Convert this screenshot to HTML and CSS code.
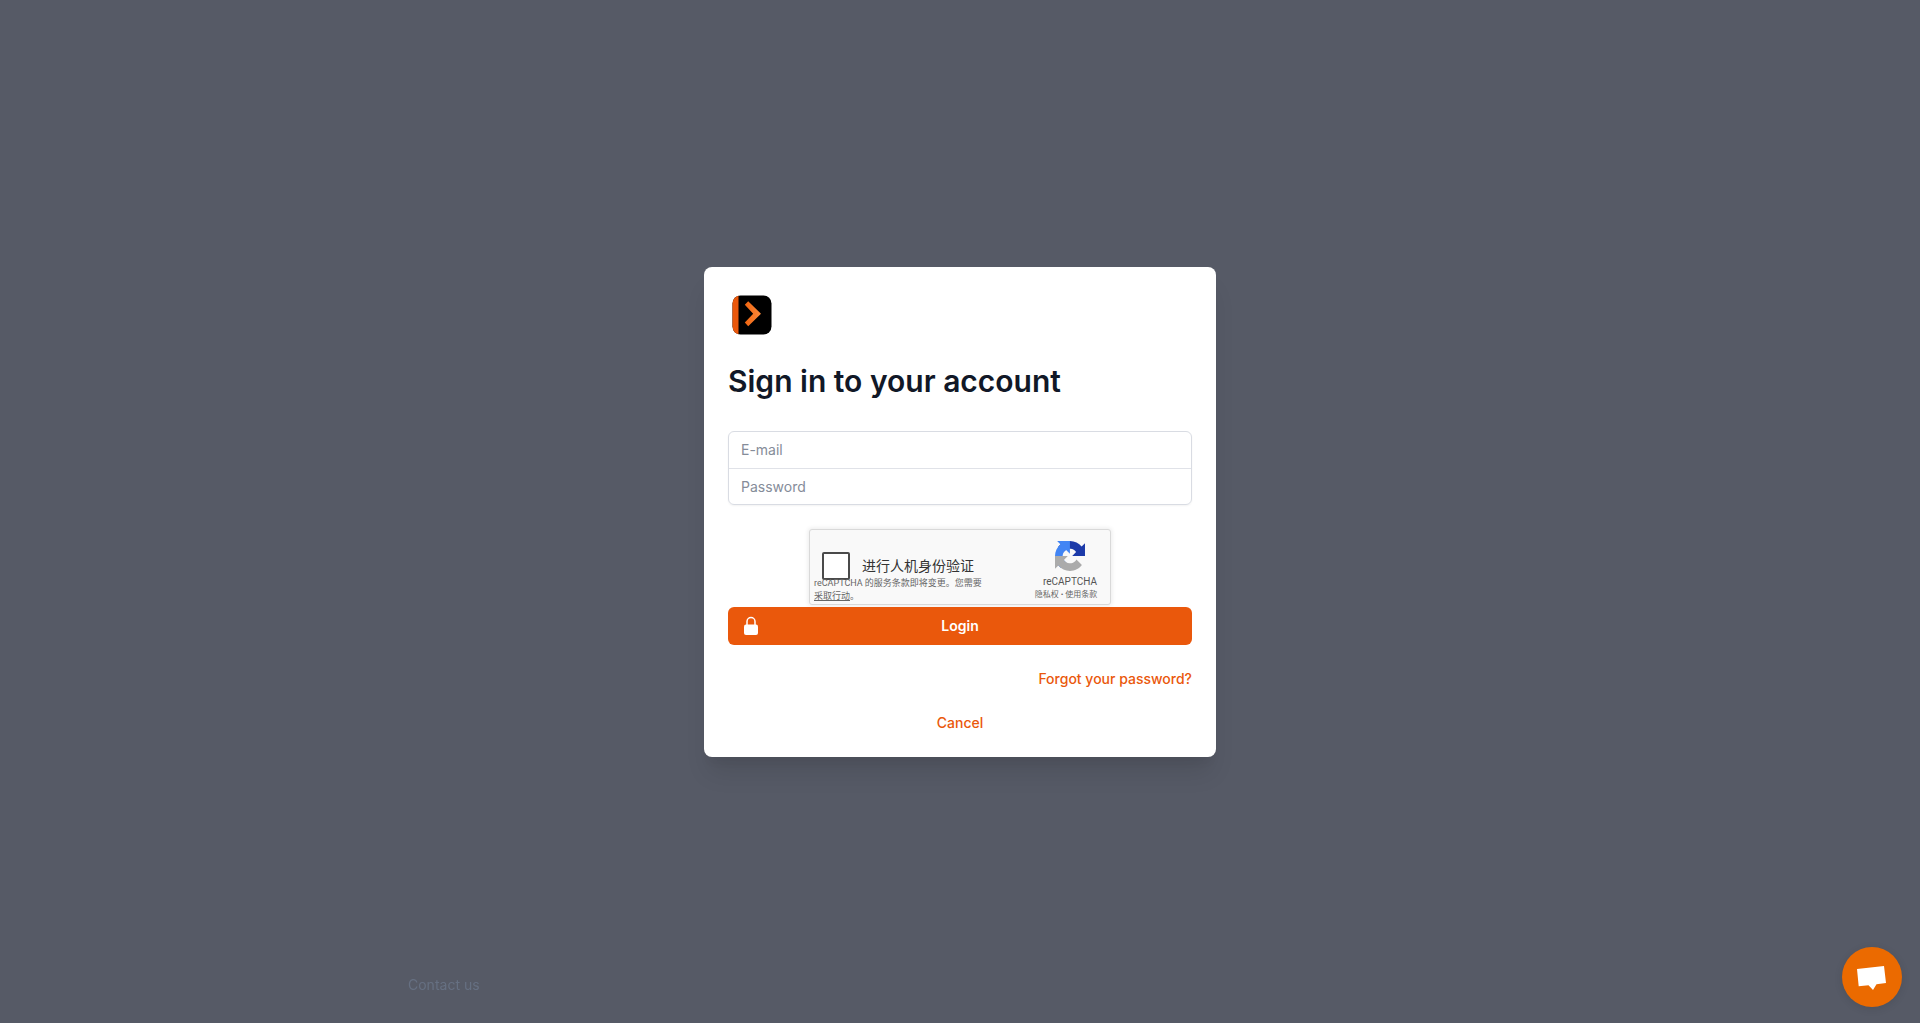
FILE: index.html
```
<!DOCTYPE html>
<html lang="en">
<head>
    <meta charset="UTF-8">
    <meta name="viewport" content="width=device-width, initial-scale=1.0">
    <title>Sign in to your account</title>
    <link rel="stylesheet" href="styles.css">
</head>
<body>
    <main class="page">
        <div class="card">
            <svg class="logo" viewBox="0 0 48 48" aria-hidden="true">
                <defs>
                    <linearGradient id="arrow" x1="0" y1="0" x2="1" y2="0">
                        <stop offset="0" stop-color="#f0640f"/>
                        <stop offset="1" stop-color="#fb8a3c"/>
                    </linearGradient>
                    <clipPath id="tile"><rect x="4.5" y="4.5" width="39" height="39" rx="8"/></clipPath>
                </defs>
                <g clip-path="url(#tile)">
                    <rect width="48" height="48" fill="#000"/>
                    <rect width="10.5" height="48" fill="#ea580c"/>
                </g>
                <path d="M20.2 10.2L33 22.7L20.2 35.2L16.8 31.6L25.2 22.7L16.8 13.8Z" fill="url(#arrow)"/>
            </svg>
            <h1>Sign in to your account</h1>
            <form>
                <div class="fields">
                    <input type="email" name="email" placeholder="E-mail" aria-label="E-mail">
                    <input type="password" name="password" placeholder="Password" aria-label="Password">
                </div>
                <div class="captcha" lang="zh-CN">
                    <div class="captcha-main">
                        <div class="captcha-check">
                            <input type="checkbox" id="robot">
                            <label for="robot">进行人机身份验证</label>
                        </div>
                        <p class="captcha-notice">reCAPTCHA 的服务条款即将变更。您需要<a href="#">采取行动</a>。</p>
                    </div>
                    <div class="captcha-brand">
                        <svg class="captcha-logo" viewBox="0 0 64 64" aria-hidden="true">
                            <path fill="#1c3aa9" d="M64 31.955l-.033-1.37V4.687l-7.16 7.16C50.948 4.674 42.033.093 32.05.093c-10.4 0-19.622 4.96-25.458 12.64l11.736 11.86a15.55 15.55 0 0 1 4.754-5.334c2.05-1.6 4.952-2.906 8.968-2.906.485 0 .86.057 1.135.163 4.976.393 9.288 3.14 11.828 7.124l-8.307 8.307L64 31.953"/>
                            <path fill="#4285f4" d="M31.862.094l-1.37.033H4.594l7.16 7.16C4.58 13.147 0 22.06 0 32.046c0 10.4 4.96 19.622 12.64 25.458L24.5 45.768a15.55 15.55 0 0 1-5.334-4.754c-1.6-2.05-2.906-4.952-2.906-8.968 0-.485.057-.86.163-1.135.393-4.976 3.14-9.288 7.124-11.828l8.307 8.307L31.86.095"/>
                            <path fill="#ababab" d="M.001 32.045l.033 1.37v25.898l7.16-7.16c5.86 7.173 14.774 11.754 24.76 11.754 10.4 0 19.622-4.96 25.458-12.64l-11.736-11.86a15.55 15.55 0 0 1-4.754 5.334c-2.05 1.6-4.952 2.906-8.968 2.906-.485 0-.86-.057-1.135-.163-4.976-.393-9.288-3.14-11.828-7.124l8.307-8.307c-10.522.04-22.4.066-27.295-.005"/>
                        </svg>
                        <span class="captcha-name">reCAPTCHA</span>
                        <span class="captcha-links"><a href="#">隐私权</a> • <a href="#">使用条款</a></span>
                    </div>
                </div>
                <button type="submit" class="login">
                    <svg class="lock" viewBox="0 0 20 20" aria-hidden="true">
                        <path d="M6 9V5.5a4 4 0 0 1 8 0V9" fill="none" stroke="#fff" stroke-width="1.5"/>
                        <rect x="3" y="8.5" width="14" height="10.5" rx="2" fill="#fff"/>
                    </svg>
                    <span>Login</span>
                </button>
            </form>
            <a href="#" class="link forgot">Forgot your password?</a>
            <a href="#" class="link cancel">Cancel</a>
        </div>
    </main>
    <footer class="footer">
        <a href="#">Contact us</a>
    </footer>
    <button type="button" class="chat" aria-label="Open chat">
        <svg viewBox="0 0 60 60" aria-hidden="true">
            <path d="M15 22L42 19L44 36L34.5 37.2L31 43L26.5 38.2L16.7 39.2Z" fill="#fff"/>
        </svg>
    </button>
</body>
</html>
```
FILE: styles.css
```
* {
    box-sizing: border-box;
}
body {
    font-family: Inter, "Noto Sans CJK SC", sans-serif;
    font-size: 14px;
    line-height: 20px;
    background-color: #565a66;
    color: #111827;
    margin: 0;
    min-height: 100vh;
}
a {
    color: inherit;
    text-decoration: none;
}
.page {
    display: flex;
    align-items: center;
    justify-content: center;
    min-height: 100vh;
}
.card {
    display: flex;
    flex-direction: column;
    width: 100%;
    max-width: 512px;
    padding: 24px;
    background-color: #fff;
    border-radius: 8px;
    box-shadow: 0 20px 25px -5px rgba(0, 0, 0, 0.1), 0 10px 10px -5px rgba(0, 0, 0, 0.04);
}
.logo {
    width: 48px;
    height: 48px;
}
h1 {
    margin: 24px 0 32px;
    font-size: 30px;
    line-height: 36px;
    font-weight: 600;
}
.fields {
    display: flex;
    flex-direction: column;
    border: 1px solid #d9dce3;
    border-radius: 6px;
    box-shadow: 0 1px 2px rgba(0, 0, 0, 0.05);
}
.fields input {
    height: 36px;
    padding: 0 12px;
    border: 0;
    border-radius: 6px;
    background: none;
    font: inherit;
}
.fields input + input {
    border-top: 1px solid #e0e2e8;
    border-radius: 0 0 6px 6px;
}
.fields input::placeholder {
    color: #858c99;
}

/* captcha box */
.captcha {
    display: flex;
    justify-content: space-between;
    width: 302px;
    height: 76px;
    margin: 24px auto 2px;
    background-color: #f9f9f9;
    border: 1px solid #d9d9d9;
    border-radius: 3px;
    box-shadow: 0 0 4px 1px rgba(0, 0, 0, 0.08);
    font-family: Roboto, "Noto Sans CJK SC", sans-serif;
    color: #666;
}
.captcha-main {
    width: 176px;
    padding: 22px 0 0 4px;
}
.captcha-check {
    display: flex;
    align-items: center;
    gap: 12px;
    padding-left: 8px;
    color: #333;
}
.captcha-check input {
    appearance: none;
    width: 28px;
    height: 28px;
    margin: 0;
    background-color: #fff;
    border: 2px solid #4a4a4a;
    border-radius: 2px;
}
.captcha-notice {
    margin: -3px 0 0;
    font-size: 9px;
    line-height: 13px;
}
.captcha-notice a {
    text-decoration: underline;
}
.captcha-brand {
    display: flex;
    flex-direction: column;
    align-items: center;
    width: 80px;
    padding-top: 11px;
}
.captcha-logo {
    width: 30px;
    height: 30px;
}
.captcha-name {
    margin-top: 4px;
    font-size: 10px;
    line-height: 14px;
    color: #555;
}
.captcha-links {
    padding-right: 8px;
    font-size: 8px;
    line-height: 12px;
    white-space: nowrap;
}

.login {
    display: grid;
    grid-template-columns: 20px 1fr 20px;
    align-items: center;
    width: 100%;
    height: 38px;
    padding: 0 13px;
    background-color: #ea580c;
    border: 0;
    border-radius: 6px;
    color: #fff;
    font: inherit;
    font-weight: 600;
    cursor: pointer;
}
.login:hover {
    background-color: #c2410c;
}
.lock {
    width: 20px;
    height: 20px;
}
.link {
    margin-top: 24px;
    color: #ea580c;
    font-weight: 500;
}
.forgot {
    align-self: flex-end;
}
.cancel {
    align-self: center;
}

/* bottom of the page */
.footer {
    position: fixed;
    bottom: 28px;
    left: 0;
    right: 0;
    max-width: 1152px;
    margin: 0 auto;
    padding: 0 24px;
    color: #667082;
}
.chat {
    position: fixed;
    right: 18px;
    bottom: 16px;
    width: 60px;
    height: 60px;
    padding: 0;
    border: 0;
    border-radius: 50%;
    background-color: #eb6a00;
    box-shadow: 0 2px 8px rgba(0, 0, 0, 0.1);
    cursor: pointer;
}
.chat svg {
    display: block;
}
```
